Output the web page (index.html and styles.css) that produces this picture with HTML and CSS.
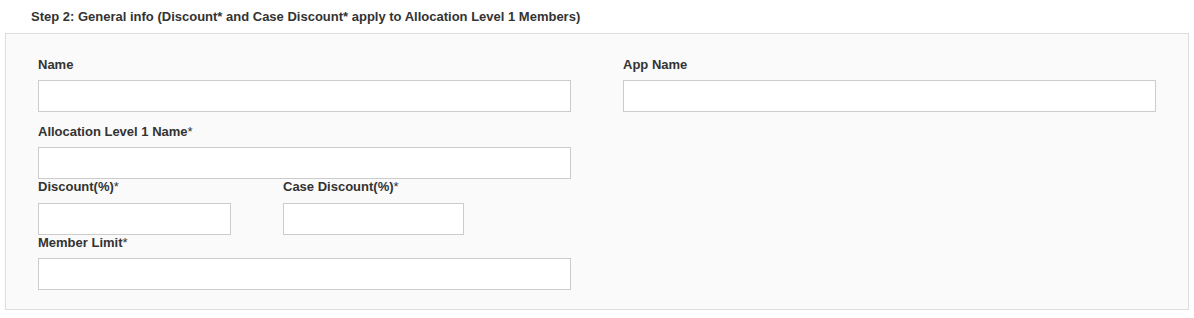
FILE: index.html
```html
<!DOCTYPE html>
<html lang="en">
<head>
    <meta charset="UTF-8">
    <title>Step 2: General info</title>
    <link rel="stylesheet" href="styles.css">
</head>
<body>
    <h4 class="step-title">Step 2: General info (Discount* and Case Discount* apply to Allocation Level 1 Members)</h4>

    <div class="panel">
        <div class="form-grid">
            <div class="col">
                <div class="field">
                    <label for="name">Name</label>
                    <input type="text" id="name">
                </div>
                <div class="field">
                    <label for="allocName">Allocation Level 1 Name<span class="req">*</span></label>
                    <input type="text" id="allocName">
                </div>
                <div class="field-row">
                    <div class="field field-discount">
                        <label for="discount">Discount(%)<span class="req">*</span></label>
                        <input type="text" id="discount">
                    </div>
                    <div class="field field-case">
                        <label for="caseDiscount">Case Discount(%)<span class="req">*</span></label>
                        <input type="text" id="caseDiscount">
                    </div>
                </div>
                <div class="field">
                    <label for="memberLimit">Member Limit<span class="req">*</span></label>
                    <input type="text" id="memberLimit">
                </div>
            </div>
            <div class="col">
                <div class="field">
                    <label for="appName">App Name</label>
                    <input type="text" id="appName">
                </div>
            </div>
        </div>
    </div>
</body>
</html>
```

FILE: styles.css
```css
* {
    margin: 0;
    padding: 0;
    box-sizing: border-box;
}

body {
    background: #fff;
    color: #333;
    font-family: 'Liberation Sans', Arial, sans-serif;
    font-size: 13px;
    padding: 0 5px;
}

.step-title {
    font-size: 13px;
    font-weight: bold;
    line-height: 16px;
    padding: 9px 0 0 26px;
    height: 33px;
}

.panel {
    background: #fafafa;
    border: 1px solid #ddd;
    box-shadow: 0 1px 1px rgba(0, 0, 0, 0.05);
    padding: 23px 32px 19px;
}

.form-grid {
    display: grid;
    grid-template-columns: 533px 533px;
    column-gap: 52px;
}

.field {
    display: flex;
    flex-direction: column;
}

/* only the first two stacked fields get a gap */
.field + .field {
    margin-top: 12px;
}

.field-row + .field {
    margin-top: 0;
}

label {
    font-weight: bold;
    line-height: 16px;
    margin-bottom: 7px;
}

.req {
    font-weight: normal;
}

input {
    height: 32px;
    border: 1px solid #ccc;
    background: #fff;
    font-family: inherit;
    font-size: 13px;
    padding: 0 8px;
}

.field-row {
    display: flex;
    gap: 52px;
}

.field-row .field + .field {
    margin-top: 0;
}

.field-row label {
    margin-bottom: 8px;
}

.field-discount {
    width: 193px;
}

.field-case {
    width: 181px;
}
```
